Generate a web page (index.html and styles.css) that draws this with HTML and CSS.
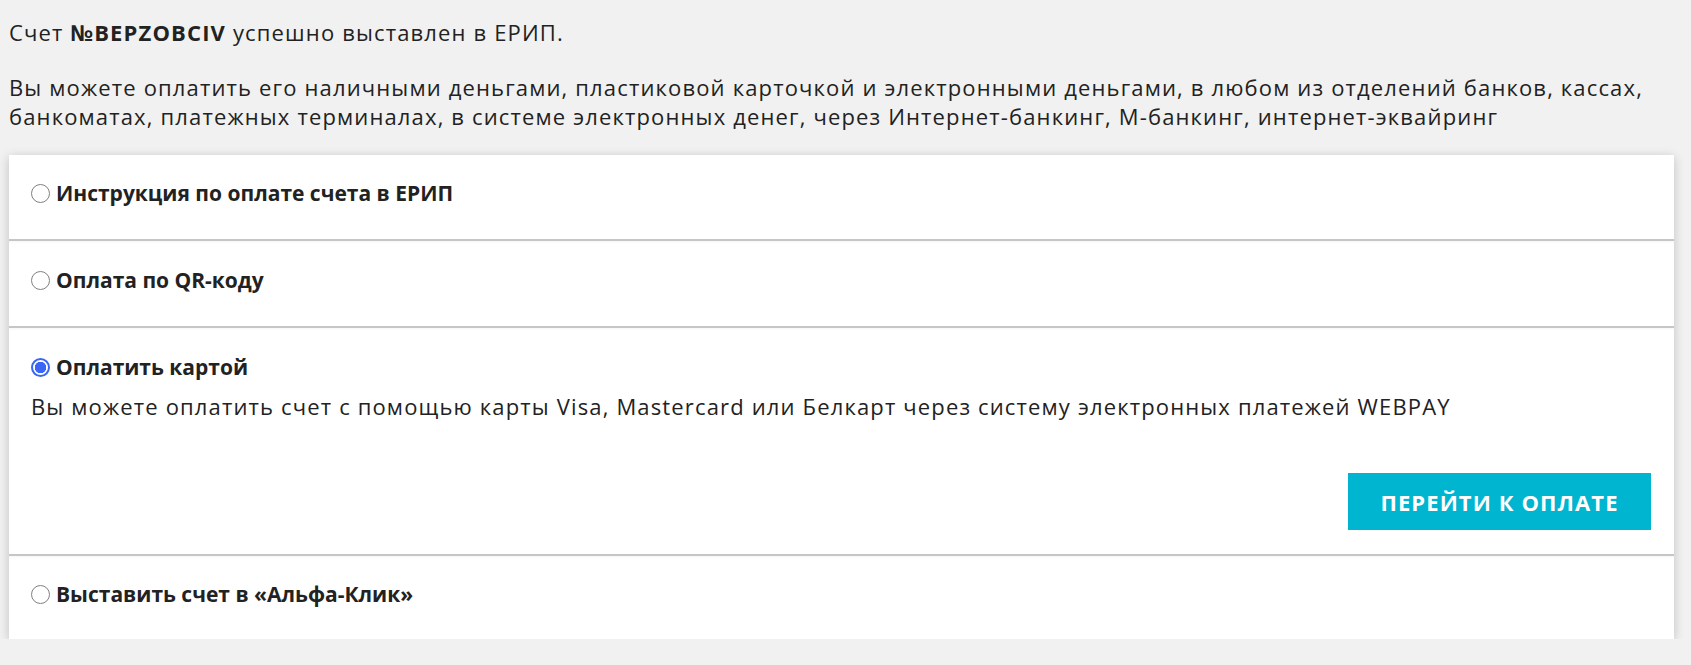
FILE: index.html
```html
<!DOCTYPE html>
<html lang="ru">
<head>
<meta charset="utf-8">
<title>Счет выставлен</title>
<link rel="stylesheet" href="styles.css">
</head>
<body>
<main class="page">
  <p class="msg">Счет <b>№BEPZOBCIV</b> успешно выставлен в ЕРИП.</p>
  <p class="info">Вы можете оплатить его наличными деньгами, пластиковой карточкой и электронными деньгами, в любом из отделений банков, кассах, банкоматах, платежных терминалах, в системе электронных денег, через Интернет-банкинг, М-банкинг, интернет-эквайринг</p>
  <section class="card">
    <div class="item item-first">
      <label class="head"><input type="radio" name="pay" class="radio"><span>Инструкция по оплате счета в ЕРИП</span></label>
    </div>
    <div class="item">
      <label class="head"><input type="radio" name="pay" class="radio"><span>Оплата по QR-коду</span></label>
    </div>
    <div class="item item-open">
      <label class="head"><input type="radio" name="pay" class="radio" checked><span>Оплатить картой</span></label>
      <p class="desc">Вы можете оплатить счет с помощью карты Visa, Mastercard или Белкарт через систему электронных платежей WEBPAY</p>
      <div class="actions"><button class="btn" type="button">Перейти к оплате</button></div>
    </div>
    <div class="item item-last">
      <label class="head"><input type="radio" name="pay" class="radio"><span>Выставить счет в «Альфа-Клик»</span></label>
    </div>
  </section>
</main>
</body>
</html>
```
FILE: styles.css
```css
html, body {
  margin: 0;
  padding: 0;
  background: #f1f1f1;
}
body {
  font-family: "Open Sans", "Noto Sans", sans-serif;
  font-size: 21px;
  line-height: 30px;
  color: #222222;
}
.page {
  padding: 17px 17px 0 9px;
}
.msg,
.info,
.desc {
  font-size: 22px;
  letter-spacing: 1.15px;
}
.msg {
  margin: 0;
}
.msg b {
  font-weight: 700;
}
.info {
  margin: 26px 0 0;
  line-height: 29px;
}
.card {
  margin-top: 24px;
  background: #ffffff;
  box-shadow: 0 2px 10px rgba(0, 0, 0, 0.2);
}
.item {
  padding: 24px 23px 31px 22px;
}
.item + .item {
  border-top: 2px solid #c6c6c6;
  box-shadow: inset 0 3px 3px -2px rgba(0, 0, 0, 0.04);
}
.item-first {
  padding-top: 23px;
}
.item-open {
  padding-bottom: 24px;
}
.item-last {
  padding-top: 23px;
  padding-bottom: 30px;
}
.head {
  display: flex;
  align-items: center;
  font-weight: 700;
  cursor: pointer;
}
.radio {
  appearance: none;
  -webkit-appearance: none;
  width: 19px;
  height: 19px;
  margin: 0 6px 0 0;
  border: 1.5px solid #808080;
  border-radius: 50%;
  background: #ffffff;
  box-sizing: border-box;
  flex: none;
}
.radio:checked {
  border: 2px solid #3a66f6;
  background: radial-gradient(circle, #3a66f6 0 5.5px, #ffffff 6px);
}
.desc {
  margin: 9px 0 0;
}
.actions {
  display: flex;
  justify-content: flex-end;
  margin-top: 52px;
}
.btn {
  width: 303px;
  height: 57px;
  padding: 0;
  border: 0;
  background: #00b5d0;
  color: #ffffff;
  font-family: "Open Sans", "Noto Sans", sans-serif;
  font-size: 22px;
  font-weight: 700;
  letter-spacing: 1.1px;
  text-transform: uppercase;
  cursor: pointer;
}
```
